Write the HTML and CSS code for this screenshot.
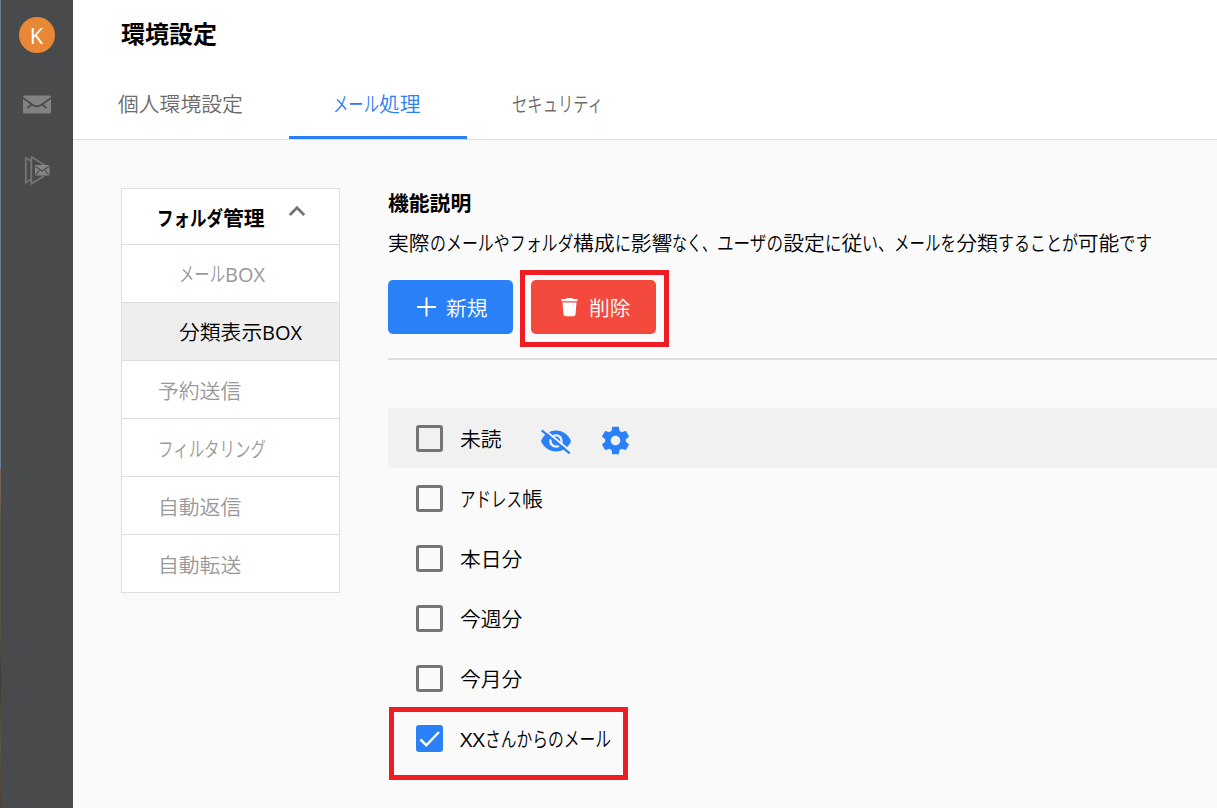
FILE: index.html
```html
<!DOCTYPE html>
<html lang="ja">
<head>
<meta charset="utf-8">
<title>環境設定</title>
<link rel="stylesheet" href="styles.css">
</head>
<body>
<div class="app">
  <aside class="rail">
    <div class="avatar">K</div>
    <svg class="rail-mail" viewBox="0 0 28 19" width="28" height="19">
      <rect x="0" y="0.500" width="28" height="18" rx="1.500" fill="#818283"/>
      <path d="M0 3L9.500 9.800Q14 13 18.500 9.800L28 3M8 8.800L8 10.200L4.500 13M20 8.800L20 10.200L23.500 13" fill="none" stroke="#484a4b" stroke-width="1.700"/>
    </svg>
    <svg class="rail-play" viewBox="0 0 26 31" width="26" height="31">
      <path d="M6.500 24.800L1.800 27.500V3L6.500 5.600M7.300 1.800V28.800L20 21M7.300 1.800L20.500 10" fill="none" stroke="#747677" stroke-width="1.700"/>
      <rect x="11" y="10" width="14.500" height="10.500" rx="1" fill="#838485"/>
      <path d="M11.500 11.500L18.200 16L25 11.500M12 19.500L15.500 15.500M24.500 19.500L21 15.500" fill="none" stroke="#484a4b" stroke-width="1.100"/>
    </svg>
  </aside>
  <main class="main">
    <header class="header">
      <h1 class="title">環境設定</h1>
      <nav class="tabs">
        <a class="tab">個人環境設定</a>
        <a class="tab active"><span data-fit="46">メール</span>処理</a>
        <a class="tab"><span data-fit="91">セキュリティ</span></a>
      </nav>
    </header>
    <div class="body">
      <ul class="menu">
        <li class="menu-head"><span data-fit="66">フォルダ</span>管理
          <svg class="chevron" viewBox="0 0 18 12" width="18" height="12"><path d="M1.800 10L9 2.800L16.200 10" fill="none" stroke="#757575" stroke-width="2.800"/></svg>
        </li>
        <li class="sub"><span data-fit="46">メール</span><span class="latin" data-fit="40">BOX</span></li>
        <li class="sub current">分類表示<span class="latin" data-fit="40">BOX</span></li>
        <li>予約送信</li>
        <li><span data-fit="108">フィルタリング</span></li>
        <li>自動返信</li>
        <li>自動転送</li>
      </ul>
      <section class="content">
        <h2 class="subtitle">機能説明</h2>
        <p class="desc">実際<span data-fit="143.5">のメールやフォルダ</span>構成<span data-fit="16">に</span>影響<span data-fit="45">なく、</span><span data-fit="66">ユーザの</span>設定<span data-fit="16.5">に</span>従<span data-fit="32">い、</span><span data-fit="62">メールを</span>分類<span data-fit="80">することが</span>可能<span data-fit="33">です</span></p>
        <div class="actions">
          <button class="btn create">
            <svg viewBox="0 0 20 20" width="20" height="20"><path d="M10.500 .5V19.500M1 10H20" stroke="#fff" stroke-width="1.900"/></svg>新規
          </button>
          <button class="btn remove">
            <svg viewBox="0 0 20 20" width="20" height="20"><path d="M2.500 2H7L8 1H13L14 2H18.500V4.200H2.500ZM3.500 5.500H17.500L16.500 17.500Q16.300 19.300 14.800 19.300H6.200Q4.700 19.300 4.500 17.500Z" fill="#fff"/></svg>削除
          </button>
          <div class="mark mark-remove"></div>
        </div>
        <ul class="list">
          <li class="row hover"><i class="box"></i><span class="label">未読</span>
            <svg class="eye" viewBox="0 0 34 30" width="34" height="30">
              <path d="M2 15C4.300 8.800 10.200 4.600 17 4.600S29.700 8.800 32 15C29.700 21.200 23.800 25.400 17 25.400S4.300 21.200 2 15Z" fill="#2a80f7"/>
              <circle cx="17" cy="15" r="6.800" fill="#f1f1f1"/><circle cx="17" cy="15" r="4.400" fill="#2a80f7"/>
              <path d="M4.300 2.800L32.300 25.800" stroke="#f1f1f1" stroke-width="2"/>
              <path d="M2.700 4.400L30.700 27.400" stroke="#2a80f7" stroke-width="2.200"/>
            </svg>
            <svg class="gear" viewBox="0 0 24 24" width="33" height="33"><path fill="#2a80f7" d="M19.430 12.980c.04-.32.07-.64.07-.98s-.03-.66-.07-.98l2.110-1.650c.19-.15.24-.42.12-.64l-2-3.460c-.12-.22-.39-.3-.61-.22l-2.490 1c-.52-.4-1.080-.73-1.690-.98l-.38-2.650C14.460 2.180 14.250 2 14 2h-4c-.25 0-.46.18-.49.42l-.38 2.650c-.61.25-1.170.59-1.690.98l-2.490-1c-.23-.09-.49 0-.61.22l-2 3.460c-.13.22-.07.49.12.64l2.110 1.650c-.04.32-.07.65-.07.98s.03.66.07.98l-2.110 1.650c-.19.15-.24.42-.12.64l2 3.460c.12.22.39.3.61.22l2.490-1c.52.4 1.080.73 1.690.98l.38 2.650c.03.24.24.42.49.42h4c.25 0 .46-.18.49-.42l.38-2.650c.61-.25 1.170-.59 1.690-.98l2.490 1c.23.09.49 0 .61-.22l2-3.460c.12-.22.07-.49-.12-.64l-2.110-1.650zM12 15.500c-1.930 0-3.500-1.570-3.500-3.500s1.570-3.500 3.500-3.500 3.500 1.570 3.500 3.500-1.570 3.500-3.500 3.500z"/></svg>
          </li>
          <li class="row"><i class="box"></i><span class="label"><span data-fit="62">アドレス</span>帳</span></li>
          <li class="row"><i class="box"></i><span class="label">本日分</span></li>
          <li class="row"><i class="box"></i><span class="label">今週分</span></li>
          <li class="row"><i class="box"></i><span class="label">今月分</span></li>
          <li class="row"><i class="box checked"><svg viewBox="0 0 27 27" width="27" height="27"><path d="M4.500 14.500L10.300 20.300L23 7" fill="none" stroke="#fff" stroke-width="2.500"/></svg></i><span class="label"><span class="latin" data-fit="25">XX</span><span data-fit="126">さんからのメール</span></span>
            <div class="mark mark-row"></div>
          </li>
        </ul>
      </section>
    </div>
  </main>
</div>
<script src="fit.js"></script>
</body>
</html>
```
FILE: styles.css
```css
* { box-sizing: border-box; }
body {
  margin: 0;
  height: 808px;
  overflow: hidden;
  background: #fafafa;
  color: #000;
  font: 350 20.8px/30px "Noto Sans CJK JP", sans-serif;
}
h1, h2, p, ul { margin: 0; padding: 0; }
ul { list-style: none; }
svg { display: block; flex: none; }
[data-fit] { display: inline-block; transform-origin: 0 50%; white-space: nowrap; }
.latin { font-family: "Open Sans", sans-serif; font-weight: 400; }

.app { display: flex; height: 808px; }
.rail {
  flex: none;
  width: 73px;
  padding-top: 17px;
  display: flex;
  flex-direction: column;
  align-items: center;
  background: linear-gradient(#6f7c91 0 58%, #765f57 58% 62%, #505746 64% 78%, #3b3b36 84%, #595947 92%, #4d3c38) 0 0 / 1px 100% no-repeat, #484a4b;
}
.avatar {
  width: 36px;
  height: 36px;
  border-radius: 50%;
  background: #e88837;
  color: #fff;
  font: 400 22px/37px "Open Sans", sans-serif;
  text-align: center;
}
.rail-mail { margin-top: 42px; }
.rail-play { margin-top: 41px; }

.main { flex: 1; min-width: 0; }
.header { height: 140px; background: #fff; border-bottom: 1px solid #ddd; display: flex; flex-direction: column; justify-content: space-between; }
.title { padding: 18px 0 0 48px; font-size: 24px; line-height: 30px; font-weight: 700; }
.tabs { display: flex; height: 69px; }
.tab { padding: 18px 45px 0; color: #6b6b6b; white-space: nowrap; }
.tab:first-child { width: 216px; }
.tab.active { width: 178px; padding-left: 44px; color: #2a80f7; border-bottom: 3px solid #2a80f7; }

.body { display: flex; gap: 48px; padding: 48px 0 0 48px; align-items: flex-start; }
.menu { flex: none; width: 219px; border: 1px solid #ddd; background: #fff; color: #999; }
.menu li { height: 58px; padding: 0 0 0 36px; line-height: 58px; border-bottom: 1px solid #ddd; white-space: nowrap; }
.menu li:last-child { border-bottom: 0; height: 57px; }
.menu .menu-head { display: flex; height: 56px; padding-left: 35px; color: #000; font-weight: 700; line-height: 57px; }
.menu .sub { padding-left: 57px; line-height: 56px; }
.menu .current { background: #eee; color: #000; }
.chevron { margin: 16px 0 0 23px; }

.content { flex: 1; min-width: 0; }
.subtitle { font-size: 20.8px; line-height: 28px; font-weight: 700; }
.desc { margin-top: 11px; line-height: 31px; white-space: nowrap; }
.actions { position: relative; display: flex; gap: 18px; height: 102px; padding-top: 22px; border-bottom: 2px solid #ddd; }
.btn { display: flex; align-items: center; gap: 10px; width: 125px; height: 54px; padding: 0 0 0 28px; border: 0; border-radius: 5px; color: #fff; font: inherit; }
.create { background: #2a80f7; }
.remove { background: #f44a3e; }
.mark { position: absolute; border: 5px solid #ee1c23; }
.mark-remove { left: 132px; top: 12px; width: 149px; height: 77px; }

.list { margin-top: 48px; }
.row { position: relative; display: flex; align-items: center; height: 60px; padding-left: 28px; }
.row.hover { background: #f1f1f1; }
.box { width: 27px; height: 27px; border: 3px solid #757575; border-radius: 3px; }
.box.checked { border: 0; background: #2a80f7; }
.label { margin-left: 17px; line-height: 60px; white-space: nowrap; }
.eye { margin: 6px 0 0 37px; }
.gear { margin: 5px 0 0 26.500px; }
.mark-row { left: 1px; top: -1px; width: 239px; height: 73px; }
```
FILE: fit.js
```js
// Condenses kana and Latin runs to the advance width given in data-fit.
document.querySelectorAll('[data-fit]').forEach(function (el) {
  var target = parseFloat(el.dataset.fit);
  var natural = el.getBoundingClientRect().width;
  el.style.transform = 'scaleX(' + target / natural + ')';
  el.style.marginRight = (target - natural) + 'px';
});
```
